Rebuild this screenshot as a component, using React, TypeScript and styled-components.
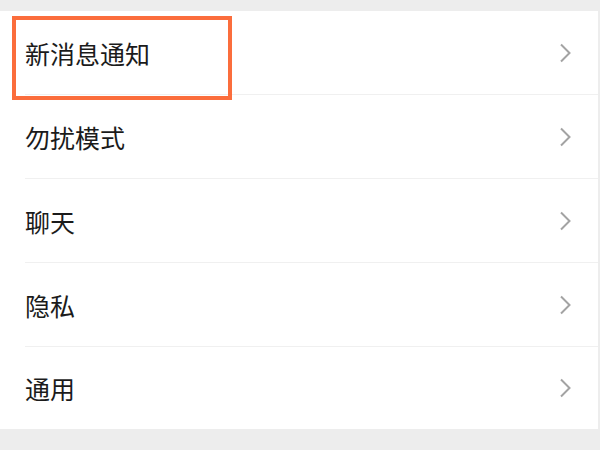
import React from "react";
import styled, { createGlobalStyle } from "styled-components";

const Global = createGlobalStyle`
  html, body { margin: 0; padding: 0; background: #ededed; }
  body { font-family: "Noto Sans CJK SC", "Noto Sans", sans-serif; }
`;

const Page = styled.div`
  width: 600px;
  height: 450px;
  background: #ededed;
  padding-top: 11px;
  box-sizing: border-box;
  overflow: hidden;
`;

const List = styled.div`
  position: relative;
  background: #fff;
  margin-right: 2px;
  display: flex;
  flex-direction: column;
`;

const Row = styled.div<{ $last?: boolean }>`
  height: ${(p) => (p.$last ? 82 : 84)}px;
  margin-left: 25px;
  padding-right: 25px;
  box-sizing: border-box;
  display: flex;
  align-items: center;
  justify-content: space-between;
  border-bottom: ${(p) => (p.$last ? "none" : "1px solid #f0f0f0")};
`;

const Label = styled.span`
  font-size: 25px;
  color: #1b1b1b;
  line-height: 1;
  padding-top: 1px;
`;

const Highlight = styled.div`
  position: absolute;
  left: 12px;
  top: 5px;
  width: 220px;
  height: 84px;
  border: 4px solid #fb6d3c;
  box-sizing: border-box;
  pointer-events: none;
`;

const Chevron = () => (
  <svg width="14" height="20" viewBox="0 0 14 20">
    <path d="M2 1.5 L10.5 10 L2 18.5" fill="none" stroke="#a3a3a3" strokeWidth="2" />
  </svg>
);

const items = ["新消息通知", "勿扰模式", "聊天", "隐私", "通用"];

export default function App() {
  return (
    <Page>
      <Global />
      <List>
        {items.map((t, i) => (
          <Row key={t} $last={i === items.length - 1}>
            <Label>{t}</Label>
            <Chevron />
          </Row>
        ))}
        <Highlight />
      </List>
    </Page>
  );
}
